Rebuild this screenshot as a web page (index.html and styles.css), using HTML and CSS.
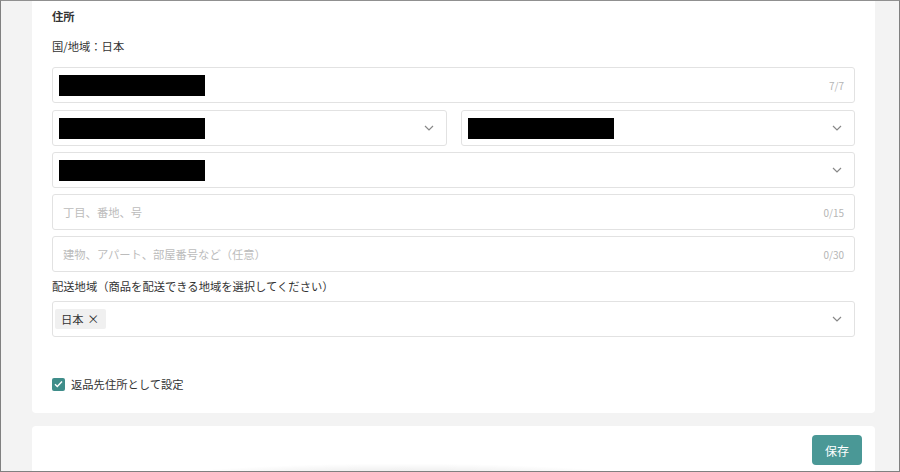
FILE: index.html
```html
<!DOCTYPE html>
<html lang="ja">
<head>
  <meta charset="UTF-8" />
  <title>住所</title>
  <link rel="stylesheet" href="styles.css">
</head>
<body>
  <div class="frame">
    <div class="card">
      <div class="title">住所</div>
      <div class="country">国/地域：日本</div>

      <div class="field first">
        <span class="redact"></span>
        <span class="count">7/7</span>
      </div>

      <div class="row">
        <div class="field">
          <span class="redact"></span>
          <svg class="chev" width="10" height="6" viewBox="0 0 10 6"><path d="M1 1l4 4 4-4" fill="none" stroke="#888" stroke-width="1.2"/></svg>
        </div>
        <div class="field">
          <span class="redact"></span>
          <svg class="chev" width="10" height="6" viewBox="0 0 10 6"><path d="M1 1l4 4 4-4" fill="none" stroke="#888" stroke-width="1.2"/></svg>
        </div>
      </div>

      <div class="field">
        <span class="redact"></span>
        <svg class="chev" width="10" height="6" viewBox="0 0 10 6"><path d="M1 1l4 4 4-4" fill="none" stroke="#888" stroke-width="1.2"/></svg>
      </div>

      <div class="field text">
        <span class="placeholder">丁目、番地、号</span>
        <span class="count">0/15</span>
      </div>

      <div class="field text">
        <span class="placeholder">建物、アパート、部屋番号など（任意）</span>
        <span class="count">0/30</span>
      </div>

      <div class="label">配送地域（商品を配送できる地域を選択してください）</div>
      <div class="field multi">
        <span class="tag">日本 <span class="x">×</span></span>
        <svg class="chev" width="10" height="6" viewBox="0 0 10 6"><path d="M1 1l4 4 4-4" fill="none" stroke="#888" stroke-width="1.2"/></svg>
      </div>

      <label class="check">
        <span class="box">
          <svg width="9" height="8" viewBox="0 0 9 8"><path d="M1 4.2l2.3 2.3L8 1.5" fill="none" stroke="#fff" stroke-width="1.4"/></svg>
        </span>
        返品先住所として設定
      </label>
    </div>

    <div class="footer">
      <button class="save">保存</button>
    </div>
  </div>
</body>
</html>
```

FILE: styles.css
```css
body {
  margin: 0;
  font-family: "Noto Sans CJK JP", "Noto Sans", sans-serif;
  font-size: 11.3px;
  color: #333;
}
.frame {
  width: 900px;
  height: 472px;
  box-sizing: border-box;
  border: 1px solid #808080;
  border-top: 1px solid #909090;
  background: #f3f3f3;
  padding: 0 24px 0 31px;
  overflow: hidden;
  position: relative;
}
.card {
  background: #fff;
  padding: 6px 20px 20px;
  border-radius: 0 0 4px 4px;
  display: flex;
  flex-direction: column;
}
.title {
  font-weight: bold;
  line-height: 18px;
}
.country {
  line-height: 18px;
  margin-top: 12px;
  margin-bottom: 12px;
}
.field {
  height: 36px;
  box-sizing: border-box;
  border: 1px solid #e2e2e2;
  border-radius: 3px;
  display: flex;
  align-items: center;
  justify-content: space-between;
  padding: 0 10px 0 6px;
  margin-bottom: 6px;
}
.field.first {
  margin-bottom: 7px;
}
.field.text {
  padding-left: 10px;
}
.redact {
  width: 146px;
  height: 21px;
  background: #000;
}
.count {
  color: #b5b5b5;
  font-size: 10px;
}
.placeholder {
  color: #bcbcbc;
}
.chev {
  margin-right: 2px;
}
.row {
  display: grid;
  grid-template-columns: 1fr 1fr;
  gap: 14px;
}
.label {
  line-height: 18px;
  margin-top: -1px;
  margin-bottom: 6px;
}
.field.multi {
  padding-left: 2px;
  margin-bottom: 38px;
}
.tag {
  background: #f0f0f0;
  border-radius: 2px;
  padding: 1px 7px 1px 6px;
  line-height: 17px;
  color: #333;
}
.x {
  font-size: 12px;
  margin-left: 1px;
}
.check {
  display: flex;
  align-items: center;
  gap: 6px;
  line-height: 18px;
}
.box {
  width: 13px;
  height: 13px;
  border-radius: 2px;
  background: #3f8d8a;
  display: flex;
  align-items: center;
  justify-content: center;
}
.footer {
  margin-top: 13px;
  background: #fff;
  height: 60px;
  border-radius: 4px 4px 0 0;
  display: flex;
  justify-content: flex-end;
  align-items: flex-start;
  padding: 9px 13px 0 0;
  position: relative;
  overflow: hidden;
}
.footer::after {
  content: "";
  position: absolute;
  left: 60px;
  bottom: -24px;
  width: 620px;
  height: 56px;
  background: radial-gradient(ellipse at center, rgba(0,0,0,0.22), rgba(0,0,0,0) 70%);
}
.save {
  width: 50px;
  height: 30px;
  border: none;
  border-radius: 4px;
  background: #4a9896;
  color: #fff;
  font-family: inherit;
  font-size: 12px;
  padding: 0;
  cursor: pointer;
}
```
